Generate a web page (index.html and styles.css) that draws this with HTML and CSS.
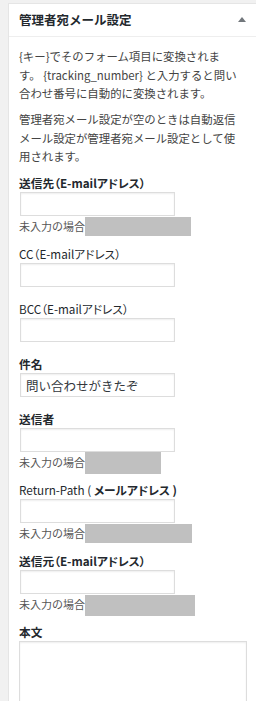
FILE: index.html
```html
<!DOCTYPE html>
<html lang="ja">
<head>
<meta charset="utf-8">
<link rel="stylesheet" href="styles.css">
</head>
<body>
<div class="panel">
  <div class="panel-head">
    <h2 class="panel-title">管理者宛メール設定</h2>
    <span class="toggle"></span>
  </div>
  <div class="panel-body">
    <p class="desc">{キー}でそのフォーム項目に変換されま<br>す。 {tracking_number} と入力すると問い<br>合わせ番号に自動的に変換されます。</p>
    <p class="desc desc-2">管理者宛メール設定が空のときは自動返信<br>メール設定が管理者宛メール設定として使<br>用されます。</p>

    <div class="field with-help">
      <label class="label bold">送信先（E-mailアドレス）</label>
      <input class="input" type="text">
      <div class="help">未入力の場合<span class="redact r1"></span></div>
    </div>

    <div class="field">
      <label class="label">CC（E-mailアドレス）</label>
      <input class="input" type="text">
    </div>

    <div class="field">
      <label class="label">BCC（E-mailアドレス）</label>
      <input class="input" type="text">
    </div>

    <div class="field">
      <label class="label bold">件名</label>
      <input class="input" type="text" value="問い合わせがきたぞ">
    </div>

    <div class="field with-help">
      <label class="label bold">送信者</label>
      <input class="input" type="text">
      <div class="help">未入力の場合<span class="redact r2"></span></div>
    </div>

    <div class="field with-help">
      <label class="label">Return-Path ( <b class="bold">メールアドレス )</b></label>
      <input class="input" type="text">
      <div class="help">未入力の場合<span class="redact r3"></span></div>
    </div>

    <div class="field with-help">
      <label class="label bold">送信元（E-mailアドレス）</label>
      <input class="input" type="text">
      <div class="help">未入力の場合<span class="redact r4"></span></div>
    </div>

    <div class="field">
      <label class="label bold">本文</label>
      <textarea class="textarea"></textarea>
    </div>
  </div>
</div>
</body>
</html>
```

FILE: styles.css
```css
html, body {
  margin: 0;
  padding: 0;
  overflow: hidden;
}
body {
  background: #f1f1f1;
  padding: 3px 0 0 8px;
  font-family: "Noto Sans CJK JP", "Noto Sans", sans-serif;
  font-size: 12px;
  color: #444;
}
.panel {
  background: #fff;
  border: 1px solid #e5e5e5;
  border-right: none;
  width: 260px;
  box-sizing: border-box;
}
.panel-head {
  height: 32px;
  border-bottom: 1px solid #eee;
  display: flex;
  align-items: center;
  padding: 0 0 0 10px;
  position: relative;
}
.panel-title {
  margin: 0;
  font-size: 12.5px;
  font-weight: 700;
  color: #23282d;
  line-height: 18px;
}
.toggle {
  position: absolute;
  left: 229px;
  top: 13px;
  width: 0;
  height: 0;
  border-left: 4px solid transparent;
  border-right: 4px solid transparent;
  border-bottom: 5px solid #72777c;
}
.panel-body {
  padding: 10px 0 0 10px;
  width: 228px;
}
.desc {
  margin: 0;
  line-height: 18.5px;
  font-size: 11.4px;
  white-space: nowrap;
  color: #444;
}
.desc-2 {
  margin-top: 7.5px;
  margin-bottom: 8.5px;
}
.field {
  display: flex;
  flex-direction: column;
  align-items: flex-start;
  margin-bottom: 13px;
}
.field.with-help {
  margin-bottom: 10px;
}
.label {
  line-height: 18px;
  font-size: 11.7px;
  color: #23282d;
  white-space: nowrap;
  font-feature-settings: "palt" 1;
}
.bold {
  font-weight: 700;
}
.input {
  margin: 0 0 0 1px;
  width: 155px;
  height: 24px;
  box-sizing: border-box;
  border: 1px solid #ddd;
  box-shadow: inset 0 1px 2px rgba(0,0,0,0.07);
  background: #fff;
  padding: 0 5px;
  font-family: "Noto Sans CJK JP", "Noto Sans", sans-serif;
  font-size: 12.5px;
  color: #32373c;
  outline: none;
}
.help {
  margin-top: 1px;
  line-height: 18px;
  height: 18px;
  font-size: 11px;
  color: #555;
  white-space: nowrap;
  display: flex;
  align-items: flex-start;
}
.redact {
  display: inline-block;
  background: #c0c0c0;
  height: 19px;
  margin-left: 0;
}
.r1 { width: 106px; }
.r2 { width: 76px; height: 22px; margin-top: -1px; }
.r3 { width: 107px; }
.r4 { width: 110px; height: 21px; }
.textarea {
  margin: 0;
  width: 228px;
  height: 80px;
  box-sizing: border-box;
  border: 1px solid #ddd;
  box-shadow: inset 0 1px 2px rgba(0,0,0,0.07);
  resize: none;
  outline: none;
}
```
